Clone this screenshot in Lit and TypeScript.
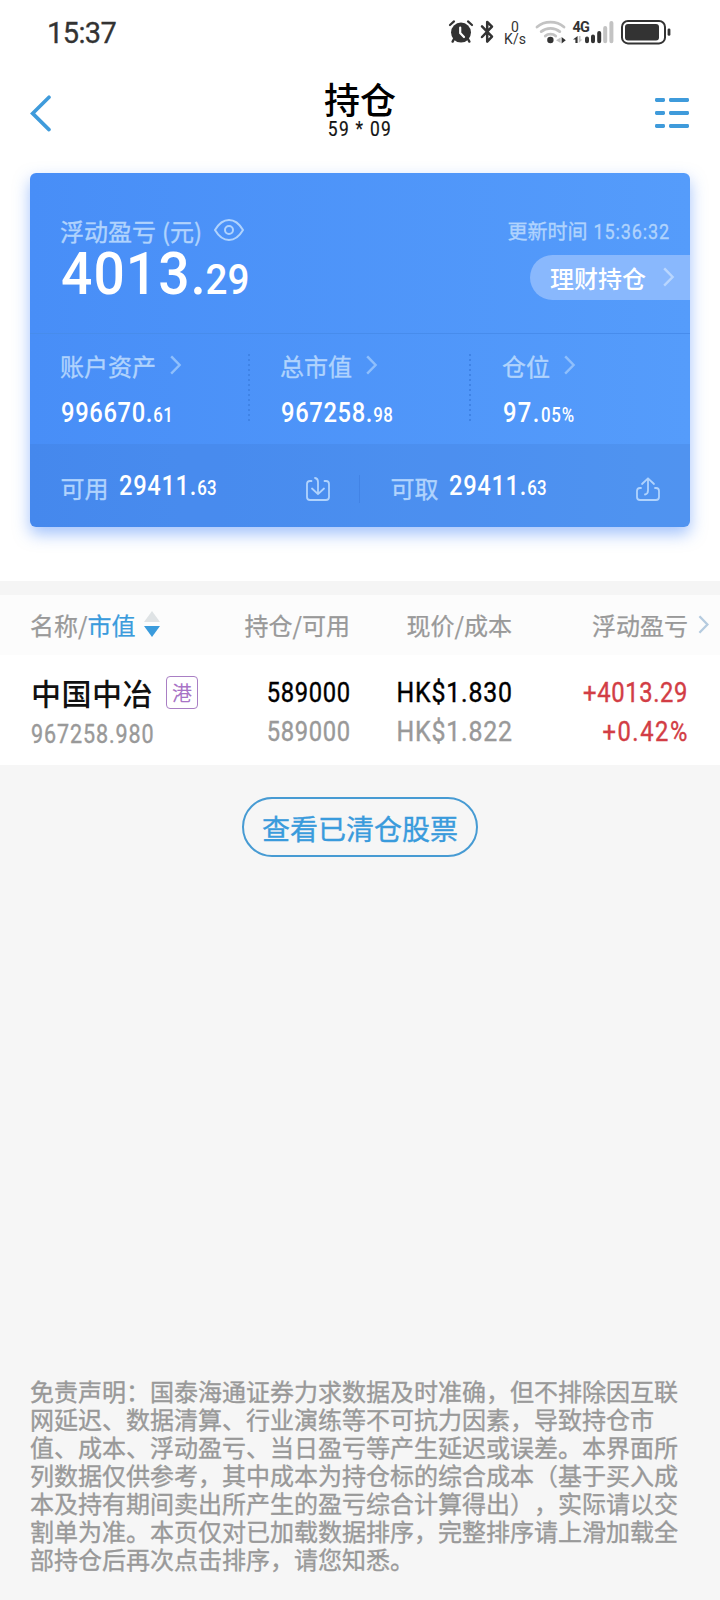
import { LitElement, html, css, svg } from "lit";
import { customElement, property } from "lit/decorators.js";

@customElement("chevron-right")
class ChevronRight extends LitElement {
  static styles = css`
    :host { display: block; line-height: 0; }
    svg { display: block; }
  `;
  @property({ type: Number }) w = 12;
  @property({ type: Number }) h = 20;
  render() {
    return html`<svg width=${this.w} height=${this.h} viewBox="0 0 12 20" fill="none" stroke="currentColor"
      stroke-width="2.4" stroke-linecap="square"><path d="M2 2.2 L9.6 10 L2 17.8" /></svg>`;
  }
}

@customElement("status-bar")
class StatusBar extends LitElement {
  static styles = css`
    :host { display: flex; align-items: flex-start; justify-content: space-between; height: 64px; box-sizing: border-box;
      padding: 18px 49px 0 47px; color: #333; font-family: Roboto, "Liberation Sans", sans-serif; }
    .time { font-size: 29px; line-height: 30px; letter-spacing: -0.6px; -webkit-text-stroke: 0.3px currentColor; }
    .icons { display: flex; gap: 7px; height: 28px; }
    svg { display: block; overflow: visible; }
    .net { width: 28px; margin-right: -1px; padding-top: 3px; box-sizing: border-box; text-align: center; font-size: 14px; line-height: 12px; }
    .sig { font-size: 15px; font-weight: 700; letter-spacing: -0.6px; }
  `;
  render() {
    return html`
      <div class="time">15:37</div>
      <div class="icons">
        <svg width="24" height="28" viewBox="0 0 24 28" fill="none" stroke="#333" stroke-linecap="round">
          <circle cx="12" cy="14.6" r="10" fill="#333" stroke="none" />
          <path d="M1 7 L5 3.4 M23 7 L19 3.4" stroke-width="2.2" />
          <path d="M5 21 L3.6 23.6 M19 21 L20.4 23.6" stroke-width="2.4" />
          <path d="M11.2 9.5 V15 L15 19" stroke="#fff" stroke-width="2.2" />
        </svg>
        <svg width="14" height="28" viewBox="0 0 14 28" fill="none" stroke="#333" stroke-width="2.5" stroke-linejoin="round" stroke-linecap="round">
          <path d="M2 8.4 L12 18.6 L7.2 23.6 V4 L12 8.6 L2 19" />
        </svg>
        <div class="net"><div>0</div><div>K/s</div></div>
        <svg width="31" height="28" viewBox="0 0 31 28" fill="none" stroke="#c3c3c3" stroke-width="2.8" stroke-linecap="round">
          <path d="M2 9 C9.5 2.6 21.5 2.6 29 9" />
          <path d="M6.2 13.6 C11.4 9.2 19.6 9.2 24.8 13.6" />
          <path d="M10.3 18 C13 15.6 18 15.6 20.7 18" />
          <circle cx="15.4" cy="22" r="3.2" fill="#333" stroke="none" />
          <path d="M25.6 19.4 V25 L21 22.2Z" fill="#c3c3c3" stroke="none" />
          <path d="M26.6 19 V25.4 L30.8 22.2Z" fill="#333" stroke="none" />
        </svg>
        <svg width="41" height="28" viewBox="0 0 41 28">
          <text class="sig" x="-0.6" y="14" fill="#333" textLength="17" lengthAdjust="spacingAndGlyphs">4G</text>
          <path d="M4.6 18 V25 H2.4 V21.6 H0 Z" fill="#333" />
          <path d="M5.8 18 V25 L9.4 21.6 H7.6 V18 Z" fill="#c3c3c3" />
          <g stroke="#333" stroke-width="4" stroke-linecap="round">
            <path d="M14 20.6 V23.2 M20 18.4 V23.2 M26.2 15 V23.2" />
            <path d="M32.2 10 V23.2 M38.4 5 V23.2" stroke="#c3c3c3" />
          </g>
        </svg>
        <svg width="50" height="28" viewBox="0 0 50 28" fill="none">
          <rect x="1" y="3" width="43" height="22.4" rx="6" stroke="#333" stroke-width="2" />
          <rect x="4" y="6" width="34" height="16.4" rx="3" fill="#333" />
          <rect x="46.6" y="10.4" width="2.8" height="7.4" rx="1.4" fill="#333" />
        </svg>
      </div>`;
  }
}

@customElement("nav-bar")
class NavBar extends LitElement {
  static styles = css`
    :host { display: grid; grid-template-columns: 100px 1fr 100px; height: 109px; }
    .back { padding: 30px 0 0 30px; }
    .menu { padding: 34px 0 0 55px; margin-left: -20px; }
    .center { text-align: center; padding-top: 14px; }
    .title { font: 500 36px/40px "Noto Sans CJK SC", sans-serif; color: #000; height: 40px; }
    .acct { font: 400 20px/22px Roboto, sans-serif; color: #111; letter-spacing: 1.5px; transform: scaleX(0.87); -webkit-text-stroke: 0.2px currentColor; }
    svg { display: block; }
  `;
  render() {
    return html`
      <div class="back"><svg width="22" height="38" viewBox="0 0 22 38" fill="none" stroke="#3f9bdb" stroke-width="3.6" stroke-linecap="round">
        <path d="M19 3.2 L2.6 19.4 L19 35.6" /></svg></div>
      <div class="center"><div class="title">持仓</div><div class="acct">59 * 09</div></div>
      <div class="menu"><svg width="34" height="30" viewBox="0 0 34 30" fill="#3f9bdb">
        ${[0, 13, 26].map((y) => svg`<rect x="0" y=${y} width="10" height="4" rx="1.4"/><rect x="14" y=${y} width="20" height="4" rx="1.4"/>`)}
      </svg></div>`;
  }
}

@customElement("asset-card")
class AssetCard extends LitElement {
  static styles = css`
    :host { display: block; margin: 0 30px; height: 354px; border-radius: 6px; color: #fff;
      background: linear-gradient(90deg, #488ef7, #559cfb); box-shadow: 0 7px 16px rgba(72, 136, 250, 0.5);
      font-family: "Noto Sans CJK SC", sans-serif; }
    svg { display: block; }
    .dim { color: #b0d3fd; -webkit-text-stroke: 0.35px currentColor; }
    .top { display: flex; justify-content: space-between; height: 161px; box-sizing: border-box; border-bottom: 1px solid #478cec; }
    .left { padding: 42px 0 0 30px; }
    .label { display: flex; align-items: center; font-size: 24px; line-height: 32px; height: 32px; }
    .unit { margin-left: 6px; }
    .eye { margin: -3px 0 0 11px; }
    .big { font: 500 60px/60px Roboto, sans-serif; letter-spacing: 1.1px; transform: scaleX(0.92); transform-origin: left; margin: -3px 0 0 1px; white-space: nowrap; }
    .big small { font-size: 42px; letter-spacing: 0; margin-left: -1.5px; }
    .right { padding-top: 42px; display: flex; flex-direction: column; align-items: flex-end; }
    .time { font-size: 20px; line-height: 32px; height: 32px; padding-right: 19.5px; white-space: nowrap; }
    .time span { display: inline-block; font-family: Roboto, sans-serif; font-size: 20.5px; letter-spacing: 1px;
      transform: scaleX(0.88); transform-origin: right; margin-left: -8.5px; }
    .pill { display: flex; align-items: center; width: 160px; height: 45px; box-sizing: border-box; margin-top: 8px;
      padding-left: 20px; border-radius: 23px 0 0 23px; background: #89b8fd; font-size: 24px; font-weight: 500; line-height: 45px; }
    .pill chevron-right { margin-left: 17px; margin-top: -2px; color: #b9d6fe; }
    .stats { display: grid; grid-template-columns: 218px 221px 1fr; height: 110px; }
    .stat { padding: 16px 0 0 30px; box-sizing: border-box; position: relative; }
    .stat + .stat { padding-left: 32px; }
    .stat:last-child { padding-left: 33px; }
    .dots { background: repeating-linear-gradient(180deg, #3f83e6 0 2px, transparent 2px 5px); position: absolute; left: 0; top: 20px; width: 2px; height: 67px; }
    .stat .label chevron-right { margin: -3px 0 0 14px; color: #8fbffc; }
    .num { font: 500 27.6px/32px Roboto, sans-serif; letter-spacing: 0.75px; transform: scaleX(0.86); transform-origin: left; white-space: nowrap; }
    .num small { font-size: 19.6px; letter-spacing: 0.3px; margin-left: 0.3px; }
    .stat .num { margin: 15px 0 0 0.5px; }
    .stat:last-child .num { letter-spacing: 1.6px; }
    .stat:last-child .num small { letter-spacing: 0.9px; }
    .foot { display: grid; grid-template-columns: 330px 1fr; height: 83px; background: rgba(62, 116, 200, 0.2); border-radius: 0 0 6px 6px; }
    .cash { display: flex; align-items: center; padding: 5px 30px 0 30.5px; font-size: 24px; line-height: 32px; }
    .cash:first-child { background: linear-gradient(#4283e5, #4283e5) right 31px / 1px 28px no-repeat; }
    .cash .num { margin: 0 0 0 10px; position: relative; top: -1px; }
    .cash svg { margin-left: auto; margin-top: 2px; }
  `;
  private stat(label: string, whole: string, frac: string, dots: boolean) {
    return html`<div class="stat">${dots ? html`<div class="dots"></div>` : ""}
      <div class="label dim"><span>${label}</span><chevron-right></chevron-right></div>
      <div class="num">${whole}.<small>${frac}</small></div>
    </div>`;
  }
  render() {
    return html`
      <div class="top">
        <div class="left">
          <div class="label dim"><span>浮动盈亏</span><span class="unit">(元)</span>
            <svg class="eye" width="32" height="24" viewBox="0 0 32 24" fill="none" stroke="#b0d3fd" stroke-width="2">
              <path d="M2 12 C5.5 6 10 2 16 2 C22 2 26.500 6 30 12 C26.500 18 22 22 16 22 C10 22 5.500 18 2 12Z" stroke-linejoin="round" />
              <circle cx="16" cy="12" r="4" /></svg>
          </div>
          <div class="big">4013.<small>29</small></div>
        </div>
        <div class="right">
          <div class="time dim">更新时间 <span>15:36:32</span></div>
          <div class="pill"><span>理财持仓</span><chevron-right></chevron-right></div>
        </div>
      </div>
      <div class="stats">
        ${this.stat("账户资产", "996670", "61", false)}
        ${this.stat("总市值", "967258", "98", true)}
        ${this.stat("仓位", "97", "05%", true)}
      </div>
      <div class="foot">
        <div class="cash"><span class="dim">可用</span><span class="num">29411.<small>63</small></span>
          <svg width="24" height="24" viewBox="0 0 24 24" fill="none" stroke="#b0d3fd" stroke-width="1.8" stroke-linecap="round" stroke-linejoin="round">
            <path d="M5.500 4 H4 Q1 4 1 7 V20 Q1 23 4 23 H20 Q23 23 23 20 V7 Q23 4 20 4 H18.500" />
            <path d="M9 1 Q12 1.500 12 5 V17 M6 11.500 L12 17.200 L18 11.500" /></svg>
        </div>
        <div class="cash"><span class="dim">可取</span><span class="num">29411.<small>63</small></span>
          <svg width="24" height="24" viewBox="0 0 24 24" fill="none" stroke="#b0d3fd" stroke-width="1.8" stroke-linecap="round" stroke-linejoin="round">
            <path d="M5 11 H4 Q1 11 1 14 V20 Q1 23 4 23 H20 Q23 23 23 20 V14 Q23 11 20 11 H19" />
            <path d="M9 17.500 Q12 17 12 13.500 V1.500 M6 7 L12 1.300 L18 7" /></svg>
        </div>
      </div>`;
  }
}

@customElement("holdings-table")
class HoldingsTable extends LitElement {
  static styles = css`
    :host { display: block; font-family: "Noto Sans CJK SC", sans-serif; border-top: 14px solid #f5f5f5; }
    .row { display: grid; padding-left: 30px; box-sizing: border-box; }
    .row > * { text-align: right; white-space: nowrap; }
    .row > :first-child { text-align: left; }
    .head { height: 60px; background: #fcfcfc; font-size: 24px; line-height: 32px; padding-top: 14px; color: #999;
      grid-template-columns: 170px 150px 162px 176px 1fr; -webkit-text-stroke: 0.25px currentColor; }
    .sortable { display: flex; align-items: center; height: 32px; }
    .active { color: #3a9bdc; }
    .sortable svg { margin: -2px 0 0 9px; }
    .head chevron-right { color: #b5cbdf; margin: 6px 0 0 10px; }
    .item { height: 110px; background: #fff; grid-template-columns: 170px 150px 162px 176px; padding-top: 18px; }
    .name { display: flex; align-items: center; height: 40px; font-size: 30px; line-height: 40px; font-weight: 500; color: #111; letter-spacing: 0.5px; margin: -1px 0 0 1px; }
    .tag { width: 32px; height: 33px; box-sizing: border-box; border: 1px solid #a97fc4; border-radius: 4px; color: #a873c6;
      font-size: 20px; line-height: 31px; font-weight: 400; text-align: center; letter-spacing: 0; margin-left: 13px; }
    .value, .cell { font: 400 27.6px/39px Roboto, sans-serif; letter-spacing: 0.75px; transform: scaleX(0.86); transform-origin: right;
      -webkit-text-stroke: 0.4px currentColor; color: #000; margin-right: -0.7px; }
    .value { font-size: 25px; line-height: 30px; color: #999; letter-spacing: 1.05px; margin: 8px 0 0 0.5px; transform-origin: left; }
    .price { letter-spacing: 0.9px; transform: scaleX(0.9); }
    .cell .sub { color: #999; }
    .up, .up .sub { color: #d23d45; }
    .up { margin-right: 0; }
    .up .sub { letter-spacing: 1.8px; margin-right: -1px; }
    svg { display: block; }
  `;
  render() {
    return html`
      <div class="row head">
        <div class="sortable"><span>名称/</span><span class="active">市值</span>
          <svg width="16" height="26" viewBox="0 0 16 26"><path d="M0 11 L8 0 L16 11Z" fill="#dfe3e5" /><path d="M0 15 H16 L8 26Z" fill="#3a9bdc" /></svg>
        </div>
        <div>持仓/可用</div><div>现价/成本</div><div>浮动盈亏</div><chevron-right w="12" h="19"></chevron-right>
      </div>
      <div class="row item">
        <div><div class="name"><span>中国中冶</span><span class="tag">港</span></div><div class="value">967258.980</div></div>
        <div class="cell"><div>589000</div><div class="sub">589000</div></div>
        <div class="cell price"><div>HK$1.830</div><div class="sub">HK$1.822</div></div>
        <div class="cell up"><div>+4013.29</div><div class="sub">+0.42%</div></div>
      </div>`;
  }
}

@customElement("app-root")
class AppRoot extends LitElement {
  static styles = css`
    :host { display: flex; flex-direction: column; width: 720px; height: 1600px; overflow: hidden; background: #f6f6f6; }
    .panel { background: #fff; height: 581px; flex: none; }
    .closed { align-self: center; width: 236px; height: 60px; box-sizing: border-box; margin-top: 32px; border: 2px solid #479bd3;
      border-radius: 30px; font: 400 28px/58px "Noto Sans CJK SC", sans-serif; color: #3a9bdc; text-align: center; white-space: nowrap;
      -webkit-text-stroke: 0.35px currentColor; }
    .disclaimer { margin: auto 30px 27px; font: 400 24px/28px "Noto Sans CJK SC", sans-serif; color: #999; white-space: pre;
      text-spacing-trim: space-all; -webkit-text-stroke: 0.35px currentColor; }
  `;
  private lines = [
    "免责声明：国泰海通证券力求数据及时准确，但不排除因互联",
    "网延迟、数据清算、行业演练等不可抗力因素，导致持仓市",
    "值、成本、浮动盈亏、当日盈亏等产生延迟或误差。本界面所",
    "列数据仅供参考，其中成本为持仓标的综合成本（基于买入成",
    "本及持有期间卖出所产生的盈亏综合计算得出），实际请以交",
    "割单为准。本页仅对已加载数据排序，完整排序请上滑加载全",
    "部持仓后再次点击排序，请您知悉。",
  ];
  render() {
    return html`
      <div class="panel"><status-bar></status-bar><nav-bar></nav-bar><asset-card></asset-card></div>
      <holdings-table></holdings-table>
      <div class="closed">查看已清仓股票</div>
      <div class="disclaimer">${this.lines.map((l) => html`<div>${l}</div>`)}</div>`;
  }
}
